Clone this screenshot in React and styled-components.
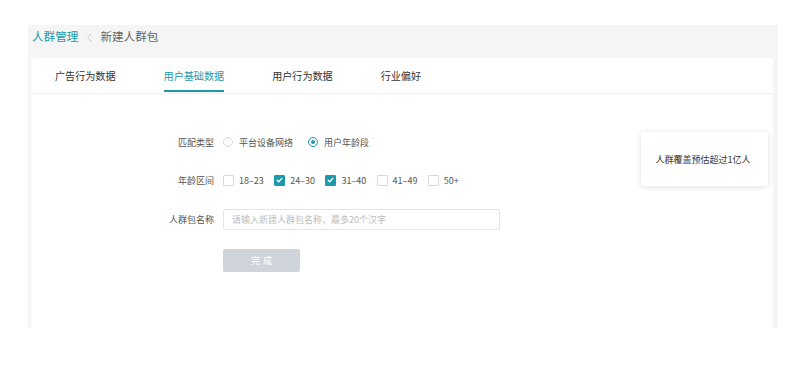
import React, { useState } from 'react'
import styled, { createGlobalStyle } from 'styled-components'

const GlobalStyle = createGlobalStyle`
  html, body {
    margin: 0;
    padding: 0;
    background: #fff;
    font-family: "Noto Sans CJK SC", "Noto Sans", sans-serif;
  }
`

const TEAL = '#1a9aab'

const Page = styled.div`
  padding: 25px 12px 0 28px;
`

const Shell = styled.div`
  background: #f5f5f5;
  display: flex;
  flex-direction: column;
`

const Breadcrumb = styled.div`
  height: 33px;
  display: flex;
  align-items: center;
  padding: 0 0 9px 4px;
  box-sizing: border-box;
  font-size: 11.6px;
  line-height: 1;
`

const Crumb = styled.span`
  color: ${({ $active }) => ($active ? TEAL : '#666')};
`

const Sep = styled.span`
  display: flex;
  align-items: center;
  margin: 0 8px 0 9px;
`

const Card = styled.div`
  background: #fff;
  margin: 0 5px 0 3px;
  height: 270px;
  border-radius: 3px 3px 0 0;
  display: flex;
  flex-direction: column;
`

const Tabs = styled.div`
  display: flex;
  height: 35px;
  border-bottom: 1px solid #f0f0f0;
`

const Tab = styled.div`
  padding: 0 24px;
  display: flex;
  align-items: center;
  font-size: 10.1px;
  color: ${({ $active }) => ($active ? TEAL : '#333')};
  cursor: pointer;
`

const TabLabel = styled.span`
  position: relative;
  height: 100%;
  display: flex;
  align-items: center;
  &::after {
    content: '';
    display: ${({ $active }) => ($active ? 'block' : 'none')};
    position: absolute;
    left: 0;
    right: 0;
    bottom: 1px;
    height: 2px;
    background: ${TEAL};
  }
`

const Body = styled.div`
  display: flex;
  align-items: flex-start;
  padding-top: 38px;
`

const Form = styled.div`
  flex: 1;
  display: flex;
  flex-direction: column;
`

const Row = styled.div`
  display: grid;
  grid-template-columns: 183px 1fr;
  column-gap: 9px;
  align-items: center;
  min-height: 20px;
  margin-bottom: ${({ $mb }) => $mb}px;
  font-size: 9px;
`

const Label = styled.div`
  text-align: right;
  color: #555;
`

const Options = styled.div`
  display: flex;
  align-items: center;
`

const Option = styled.label`
  display: flex;
  align-items: center;
  margin-right: ${({ $mr }) => $mr}px;
  color: #555;
  cursor: pointer;
`

const RadioDot = styled.span`
  width: 10px;
  height: 10px;
  box-sizing: border-box;
  border-radius: 50%;
  border: 1px solid ${({ $on }) => ($on ? TEAL : '#d9d9d9')};
  margin-right: 6px;
  display: flex;
  align-items: center;
  justify-content: center;
  &::after {
    content: '';
    width: 4px;
    height: 4px;
    border-radius: 50%;
    background: ${TEAL};
    display: ${({ $on }) => ($on ? 'block' : 'none')};
  }
`

const Box = styled.span`
  width: 11px;
  height: 11px;
  box-sizing: border-box;
  border: 1px solid ${({ $on }) => ($on ? TEAL : '#d9d9d9')};
  background: ${({ $on }) => ($on ? TEAL : '#fff')};
  border-radius: 1px;
  margin-right: 5px;
  display: flex;
  align-items: center;
  justify-content: center;
`

const Input = styled.input`
  width: 277px;
  height: 21px;
  box-sizing: border-box;
  border: 1px solid #e4e4e4;
  border-radius: 2px;
  padding: 0 8px;
  font-family: inherit;
  font-size: 9px;
  color: #333;
  outline: none;
  &::placeholder {
    color: #bdbdbd;
  }
`

const Submit = styled.button`
  width: 77px;
  height: 23px;
  border: none;
  border-radius: 2px;
  background: #cfd3da;
  color: #fff;
  font-family: inherit;
  font-size: 9px;
  letter-spacing: 3px;
  padding: 0 0 0 3px;
  cursor: not-allowed;
`

const Estimate = styled.div`
  width: 127px;
  height: 54px;
  margin-right: 5px;
  background: #fff;
  border-radius: 3px;
  box-shadow: 0 1px 6px rgba(0, 0, 0, 0.13);
  display: flex;
  align-items: center;
  justify-content: center;
  padding-right: 3px;
  box-sizing: border-box;
  font-size: 9px;
  color: #333;
`

const Check = () => (
  <svg width="7" height="6" viewBox="0 0 7 6">
    <path d="M0.8 3.1 L2.7 4.8 L6.2 1" fill="none" stroke="#fff" strokeWidth="1.3" />
  </svg>
)

const Chevron = () => (
  <svg width="5" height="9" viewBox="0 0 5 9">
    <path d="M4.2 0.6 L0.8 4.5 L4.2 8.4" fill="none" stroke="#c4c4c4" strokeWidth="0.9" />
  </svg>
)

const tabs = ['广告行为数据', '用户基础数据', '用户行为数据', '行业偏好']
const ages = [
  { label: '18–23', on: false },
  { label: '24–30', on: true },
  { label: '31–40', on: true },
  { label: '41–49', on: false },
  { label: '50+', on: false },
]

export default function App() {
  const [active, setActive] = useState(1)
  const [type, setType] = useState(1)
  const [name, setName] = useState('')

  return (
    <Page>
      <GlobalStyle />
      <Shell>
        <Breadcrumb>
          <Crumb $active>人群管理</Crumb>
          <Sep><Chevron /></Sep>
          <Crumb>新建人群包</Crumb>
        </Breadcrumb>
        <Card>
          <Tabs>
            {tabs.map((t, i) => (
              <Tab key={t} $active={i === active} onClick={() => setActive(i)}>
                <TabLabel $active={i === active}>{t}</TabLabel>
              </Tab>
            ))}
          </Tabs>
          <Body>
            <Form>
              <Row $mb={18}>
                <Label>匹配类型</Label>
                <Options>
                  <Option $mr={15} onClick={() => setType(0)}>
                    <RadioDot $on={type === 0} />平台设备网络
                  </Option>
                  <Option $mr={0} onClick={() => setType(1)}>
                    <RadioDot $on={type === 1} />用户年龄段
                  </Option>
                </Options>
              </Row>
              <Row $mb={19}>
                <Label>年龄区间</Label>
                <Options>
                  {ages.map((a) => (
                    <Option key={a.label} $mr={10.4}>
                      <Box $on={a.on}>{a.on && <Check />}</Box>
                      {a.label}
                    </Option>
                  ))}
                </Options>
              </Row>
              <Row $mb={19}>
                <Label>人群包名称</Label>
                <div>
                  <Input
                    value={name}
                    onChange={(e) => setName(e.target.value)}
                    placeholder="请输入新建人群包名称，最多20个汉字"
                  />
                </div>
              </Row>
              <Row $mb={0}>
                <span />
                <div>
                  <Submit type="button">完成</Submit>
                </div>
              </Row>
            </Form>
            <Estimate>人群覆盖预估超过1亿人</Estimate>
          </Body>
        </Card>
      </Shell>
    </Page>
  )
}
